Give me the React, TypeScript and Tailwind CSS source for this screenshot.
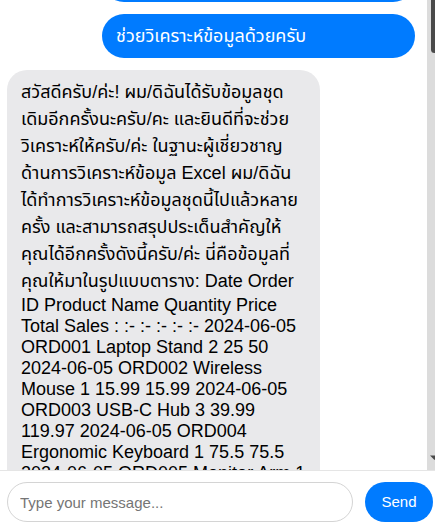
import { useEffect, useRef, useState } from "react";

type Msg = { from: "user" | "bot"; text: string };

const orders: [string, number, number][] = [
  ["Laptop Stand", 2, 25],
  ["Wireless Mouse", 1, 15.99],
  ["USB-C Hub", 3, 39.99],
  ["Ergonomic Keyboard", 1, 75.5],
  ["Monitor Arm", 1, 89.99],
  ["Webcam HD", 2, 45],
  ["Desk Lamp", 1, 29.5],
  ["Laptop Stand", 1, 25],
  ["Wireless Mouse", 4, 15.99],
  ["Noise Cancelling Headphones", 1, 129.99],
  ["USB-C Hub", 2, 39.99],
  ["Mechanical Keyboard", 1, 99.99],
  ["Monitor Arm", 2, 89.99],
  ["Webcam HD", 1, 45],
  ["Desk Lamp", 3, 29.5],
  ["Ergonomic Keyboard", 2, 75.5],
  ["Laptop Stand", 3, 25],
  ["Portable SSD 1TB", 1, 119],
  ["Wireless Mouse", 2, 15.99],
  ["USB-C Hub", 1, 39.99],
  ["Monitor Arm", 1, 89.99],
  ["Laptop Stand", 2, 25],
  ["Webcam HD", 3, 45],
  ["Mechanical Keyboard", 2, 99.99],
  ["Desk Lamp", 2, 29.5],
  ["Wireless Mouse", 5, 15.99],
  ["Noise Cancelling Headphones", 2, 129.99],
  ["USB-C Hub", 4, 39.99],
  ["Ergonomic Keyboard", 1, 75.5],
  ["Portable SSD 1TB", 2, 119],
  ["Laptop Stand", 1, 25],
  ["Monitor Arm", 3, 89.99],
  ["Wireless Mouse", 1, 15.99],
  ["Webcam HD", 2, 45],
  ["Desk Lamp", 1, 29.5],
  ["USB-C Hub", 2, 39.99],
  ["Mechanical Keyboard", 1, 99.99],
  ["Ergonomic Keyboard", 3, 75.5],
  ["Laptop Stand", 4, 25],
  ["Portable SSD 1TB", 1, 119],
];

const rows = orders
  .map(([name, qty, price], i) => {
    const total = Math.round(qty * price * 100) / 100;
    const id = "ORD" + String(i + 1).padStart(3, "0");
    const day = String(5 + Math.floor(i / 5)).padStart(2, "0");
    return `2024-06-${day} ${id} ${name} ${qty} ${price} ${total}`;
  })
  .join(" ");

const answer =
  "สวัสดีครับ/ค่ะ! ผม/ดิฉันได้รับข้อมูลชุดเดิมอีกครั้งนะครับ/คะ และยินดีที่จะช่วยวิเคราะห์ให้ครับ/ค่ะ ในฐานะผู้เชี่ยวชาญด้านการวิเคราะห์ข้อมูล Excel ผม/ดิฉันได้ทำการวิเคราะห์ข้อมูลชุดนี้ไปแล้วหลายครั้ง และสามารถสรุปประเด็นสำคัญให้คุณได้อีกครั้งดังนี้ครับ/ค่ะ นี่คือข้อมูลที่คุณให้มาในรูปแบบตาราง: Date Order ID Product Name Quantity Price Total Sales : :- :- :- :- :- " +
  rows +
  " สรุปผลการวิเคราะห์: 1. ยอดขายรวมทั้งหมดในช่วงวันที่ 2024-06-05 ถึง 2024-06-12 มีมูลค่าค่อนข้างสูง โดยสินค้าที่ทำยอดขายได้มากที่สุดคือ Monitor Arm และ Noise Cancelling Headphones ซึ่งเป็นสินค้าที่มีราคาต่อหน่วยสูง 2. สินค้าที่ขายได้จำนวนชิ้นมากที่สุดคือ Wireless Mouse และ Laptop Stand แสดงให้เห็นว่าลูกค้านิยมซื้ออุปกรณ์เสริมราคาไม่สูงมากนัก 3. USB-C Hub มียอดขายสม่ำเสมอทุกวัน จึงควรสำรองสินค้าไว้ให้เพียงพอ 4. ควรพิจารณาจัดโปรโมชั่นแบบแพ็กคู่ เช่น Laptop Stand คู่กับ Wireless Mouse เพื่อเพิ่มยอดขายต่อออเดอร์ 5. หากต้องการ ผม/ดิฉันสามารถช่วยสร้าง Pivot Table หรือกราฟสรุปยอดขายรายวันใน Excel ให้ได้ครับ/ค่ะ";

const initial: Msg[] = [
  { from: "user", text: "ช่วยวิเคราะห์ข้อมูลด้วยครับ" },
  { from: "user", text: "ช่วยวิเคราะห์ข้อมูลด้วยครับ" },
  { from: "bot", text: answer },
  { from: "user", text: "ขอบคุณครับ ช่วยทำกราฟให้ด้วยได้ไหม" },
  {
    from: "bot",
    text: "ได้เลยครับ/ค่ะ! สำหรับการสร้างกราฟใน Excel ให้เลือกข้อมูลคอลัมน์ Product Name และ Total Sales จากนั้นไปที่แท็บ Insert แล้วเลือก Column Chart หรือ Pie Chart ตามต้องการ คุณสามารถปรับแต่งชื่อกราฟ สี และป้ายกำกับข้อมูลได้จากเมนู Chart Design ครับ/ค่ะ",
  },
  { from: "user", text: "สรุปยอดขายรายวันให้หน่อยครับ" },
  {
    from: "bot",
    text: "แน่นอนครับ/ค่ะ! วิธีที่ง่ายที่สุดคือการใช้ Pivot Table โดยเลือกข้อมูลทั้งหมด แล้วไปที่ Insert > PivotTable จากนั้นลากฟิลด์ Date ไปไว้ที่ Rows และลากฟิลด์ Total Sales ไปไว้ที่ Values ระบบจะคำนวณผลรวมของยอดขายในแต่ละวันให้อัตโนมัติ หรือถ้าต้องการใช้สูตร สามารถใช้ =SUMIF(A:A, \"2024-06-05\", F:F) เพื่อหายอดขายของวันที่ต้องการได้ครับ/ค่ะ จากข้อมูลนี้ วันที่มียอดขายสูงที่สุดคือวันที่มีการสั่งซื้อ Monitor Arm และ Noise Cancelling Headphones หลายชิ้นครับ/ค่ะ",
  },
  { from: "user", text: "ขอบคุณมากครับ" },
  {
    from: "bot",
    text: "ยินดีครับ/ค่ะ! หากมีข้อมูลชุดใหม่หรืออยากให้ช่วยวิเคราะห์เพิ่มเติม เช่น แนวโน้มยอดขาย สินค้าขายดี หรือการพยากรณ์ยอดขายในเดือนถัดไป สามารถส่งข้อมูลมาได้ตลอดเลยนะครับ/คะ",
  },
];

export default function App() {
  const [messages, setMessages] = useState<Msg[]>(initial);
  const [input, setInput] = useState("");
  const listRef = useRef<HTMLDivElement>(null);
  const [bar, setBar] = useState({ top: 0, size: 0 });

  // barra de desplazamiento dibujada a mano
  const updateBar = () => {
    const el = listRef.current;
    if (!el) return;
    const track = el.clientHeight - 30;
    const size = Math.max(20, (track * el.clientHeight) / el.scrollHeight);
    const max = Math.max(1, el.scrollHeight - el.clientHeight);
    setBar({ top: ((track - size) * el.scrollTop) / max, size });
  };

  useEffect(updateBar, [messages]);

  const send = () => {
    if (!input.trim()) return;
    setMessages([...messages, { from: "user", text: input }]);
    setInput("");
  };

  return (
    <div className="h-[529px] w-full overflow-hidden bg-white font-['Liberation_Sans','Noto_Sans_Thai',sans-serif] text-black">
      <div className="-mt-[42px] flex h-[571px] w-[442px] flex-col">
        <div className="flex min-h-0 flex-1">
          {/* lista de mensajes */}
          <div
            ref={listRef}
            onScroll={updateBar}
            className="min-w-0 flex-1 overflow-y-scroll [scrollbar-width:none]"
          >
            <div className="flex flex-col gap-3 pb-3">
              {messages.map((m, i) =>
                m.from === "user" ? (
                  <div
                    key={i}
                    className="mr-[12px] ml-auto w-[313px] rounded-[22px] bg-[#007bff] px-[14px] pt-[9px] pb-[8px] text-[18px] leading-[normal] text-white"
                  >
                    {m.text}
                  </div>
                ) : (
                  <div
                    key={i}
                    className="ml-[7px] w-[313px] rounded-[20px] bg-[#e9e9eb] px-[14px] pt-[9px] pb-[8px] text-[18px] leading-[normal]"
                  >
                    {m.text}
                  </div>
                )
              )}
            </div>
          </div>

          <div className="flex w-[15px] shrink-0 flex-col bg-[#dcdcdc]">
            <svg width="15" height="15" viewBox="0 0 15 15" className="shrink-0">
              <polygon points="3,10 12,10 7.5,5.5" fill="#4a4a4a" />
            </svg>
            <div className="min-h-0 flex-1">
              <div
                className="mx-[4px] w-[7px] rounded-full bg-[#4a4a4a]"
                style={{ marginTop: bar.top, height: bar.size }}
              />
            </div>
            <svg width="15" height="15" viewBox="0 0 15 15" className="shrink-0">
              <polygon points="3,0.5 12,0.5 7.5,5" fill="#4a4a4a" />
            </svg>
          </div>
        </div>

        {/* barra de entrada */}
        <div className="flex h-[59px] shrink-0 items-start gap-3 border-t border-[#e5e5e5] pt-[11px] pl-[7px]">
          <input
            value={input}
            onChange={(e) => setInput(e.target.value)}
            onKeyDown={(e) => e.key === "Enter" && send()}
            placeholder="Type your message..."
            className="h-[40px] w-[346px] shrink-0 rounded-full border border-[#d4d4d4] px-[12px] text-[15px] outline-none placeholder:text-[#757575]"
          />
          <button
            onClick={send}
            className="h-[40px] w-[68px] shrink-0 rounded-full bg-[#007bff] text-[15px] text-white"
          >
            Send
          </button>
        </div>
      </div>
    </div>
  );
}
